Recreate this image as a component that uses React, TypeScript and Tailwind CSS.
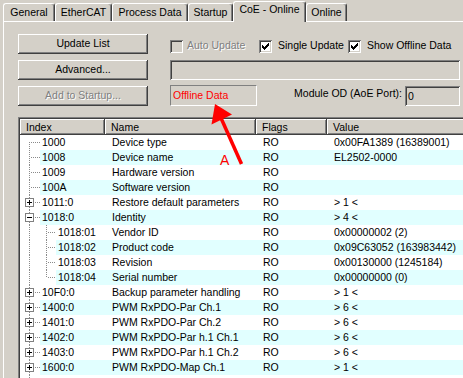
import React from "react";

const RAISED =
  "shadow-[inset_-1px_-1px_0_#404040,inset_1px_1px_0_#ffffff,inset_-2px_-2px_0_#808080,inset_2px_2px_0_#d4d0c8]";
const SUNKEN =
  "shadow-[inset_1px_1px_0_#808080,inset_-1px_-1px_0_#ffffff,inset_2px_2px_0_#404040,inset_-2px_-2px_0_#d4d0c8]";

function Tab({ className, children }: { className: string; children: React.ReactNode }) {
  return (
    <div
      className={`h-[18px] flex items-center justify-center border-t border-l border-r border-t-white border-l-white border-r-[#404040] rounded-tl-[3px] rounded-tr-[3px] shadow-[inset_-1px_0_0_#808080] ${className}`}
    >
      {children}
    </div>
  );
}

function Button({ children, disabled }: { children: React.ReactNode; disabled?: boolean }) {
  return (
    <div className={`w-[130px] h-[20px] shrink-0 flex items-center justify-center pb-[2px] bg-[#d4d0c8] ${RAISED}`}>
      <span className={disabled ? "text-[#808080] [text-shadow:1px_1px_0_#ffffff]" : ""}>{children}</span>
    </div>
  );
}

function CheckMark() {
  const cols = [
    [3, 5],
    [4, 6],
    [5, 7],
    [6, 6],
    [7, 5],
    [8, 4],
    [9, 3],
  ];
  return (
    <svg width="13" height="13" viewBox="0 0 13 13" shapeRendering="crispEdges">
      {cols.map(([x, y]) => (
        <rect key={x} x={x} y={y} width="1" height="3" fill="#000" />
      ))}
    </svg>
  );
}

function Check({ checked, disabled }: { checked?: boolean; disabled?: boolean }) {
  return (
    <div className={`w-[13px] h-[13px] shrink-0 ${disabled ? "bg-[#d4d0c8]" : "bg-white"} ${SUNKEN}`}>
      {checked && <CheckMark />}
    </div>
  );
}

type Row = { i: string; n: string; v: string; l: 0 | 1; box?: "plus" | "minus"; last?: boolean };

const rows: Row[] = [
  { i: "1000", n: "Device type", v: "0x00FA1389 (16389001)", l: 0 },
  { i: "1008", n: "Device name", v: "EL2502-0000", l: 0 },
  { i: "1009", n: "Hardware version", v: "", l: 0 },
  { i: "100A", n: "Software version", v: "", l: 0 },
  { i: "1011:0", n: "Restore default parameters", v: "> 1 <", l: 0, box: "plus" },
  { i: "1018:0", n: "Identity", v: "> 4 <", l: 0, box: "minus" },
  { i: "1018:01", n: "Vendor ID", v: "0x00000002 (2)", l: 1 },
  { i: "1018:02", n: "Product code", v: "0x09C63052 (163983442)", l: 1 },
  { i: "1018:03", n: "Revision", v: "0x00130000 (1245184)", l: 1 },
  { i: "1018:04", n: "Serial number", v: "0x00000000 (0)", l: 1, last: true },
  { i: "10F0:0", n: "Backup parameter handling", v: "> 1 <", l: 0, box: "plus" },
  { i: "1400:0", n: "PWM RxPDO-Par Ch.1", v: "> 6 <", l: 0, box: "plus" },
  { i: "1401:0", n: "PWM RxPDO-Par Ch.2", v: "> 6 <", l: 0, box: "plus" },
  { i: "1402:0", n: "PWM RxPDO-Par h.1 Ch.1", v: "> 6 <", l: 0, box: "plus" },
  { i: "1403:0", n: "PWM RxPDO-Par h.1 Ch.2", v: "> 6 <", l: 0, box: "plus" },
  { i: "1600:0", n: "PWM RxPDO-Map Ch.1", v: "> 1 <", l: 0, box: "plus" },
];

const DOT = { stroke: "#8a8a8a", strokeDasharray: "1 1", strokeWidth: 1 } as const;

function Tree({ row, first }: { row: Row; first: boolean }) {
  if (row.l === 1) {
    return (
      <svg width="36" height="15" className="shrink-0" shapeRendering="crispEdges">
        <line x1="9.5" y1="0" x2="9.5" y2="15" {...DOT} />
        <line x1="26.5" y1="0" x2="26.5" y2={row.last ? 8 : 15} {...DOT} />
        <line x1="28" y1="7.5" x2="36" y2="7.5" {...DOT} />
      </svg>
    );
  }
  return (
    <svg width="20" height="15" className="shrink-0" shapeRendering="crispEdges">
      {row.box ? (
        <>
          {!first && <line x1="9.5" y1="0" x2="9.5" y2="3" {...DOT} />}
          <line x1="9.5" y1="12" x2="9.5" y2="15" {...DOT} />
          <line x1="15" y1="7.5" x2="20" y2="7.5" {...DOT} />
          <rect x="5.5" y="3.5" width="8" height="8" fill="#ffffff" stroke="#808080" />
          <line x1="7" y1="7.5" x2="12" y2="7.5" stroke="#000" />
          {row.box === "plus" && <line x1="9.5" y1="5" x2="9.5" y2="10" stroke="#000" />}
        </>
      ) : (
        <>
          <line x1="9.5" y1={first ? 7 : 0} x2="9.5" y2="15" {...DOT} />
          <line x1="11" y1="7.5" x2="20" y2="7.5" {...DOT} />
        </>
      )}
    </svg>
  );
}

export default function App() {
  return (
    <div className="relative w-[463px] h-[378px] overflow-hidden bg-[#d4d0c8] text-black text-[10.5px] leading-none font-['Liberation_Sans',Arial,sans-serif]">
      {/* Tabs */}
      <div className="relative z-10 flex items-end h-[21px] pl-[3px]">
        <Tab className="w-[52px]">General</Tab>
        <Tab className="w-[57px]">EtherCAT</Tab>
        <Tab className="w-[76px]">Process Data</Tab>
        <Tab className="w-[45px]">Startup</Tab>
        <div className="w-[73px] h-[21px] -mb-px bg-[#d4d0c8] flex justify-center pt-[2px] border-t border-l border-r border-t-white border-l-white border-r-[#404040] rounded-tl-[3px] rounded-tr-[3px] shadow-[inset_-1px_0_0_#808080]">
          CoE - Online
        </div>
        <Tab className="w-[41px]">Online</Tab>
      </div>

      {/* Panel */}
      <div className="flex flex-col h-[357px] ml-[3px] border-t border-l border-white pl-[14px] pt-[12px]">
        {/* Row 1 */}
        <div className="flex h-[20px]">
          <Button>Update List</Button>
          <div className="ml-[22px] pt-[6px] flex items-start">
            <div className="w-[89px] flex items-start">
              <Check disabled />
              <span className="ml-[4px] text-[#808080] [text-shadow:1px_1px_0_#ffffff]">Auto Update</span>
            </div>
            <div className="w-[89px] flex items-start">
              <Check checked />
              <span className="ml-[6px]">Single Update</span>
            </div>
            <div className="flex items-start">
              <Check checked />
              <span className="ml-[6px] whitespace-nowrap">Show Offline Data</span>
            </div>
          </div>
        </div>

        {/* Row 2 */}
        <div className="flex h-[20px] mt-[6px]">
          <Button>Advanced...</Button>
          <div className={`ml-[22px] w-[290px] h-[20px] bg-[#d4d0c8] ${SUNKEN}`} />
        </div>

        {/* Row 3 */}
        <div className="flex h-[20px] mt-[6px]">
          <Button disabled>Add to Startup...</Button>
          <div className="ml-[22px] -mt-px w-[87px] h-[21px] flex items-center pl-[2px] border-t border-l border-b border-r border-t-[#808080] border-l-[#808080] border-b-white border-r-white text-[#ff0000]">
            Offline Data
          </div>
          <div className="w-[145px] flex justify-end items-start pt-[2px] whitespace-nowrap">Module OD (AoE Port):</div>
          <div className={`ml-[3px] w-[55px] h-[20px] flex items-center pl-[3px] bg-[#d4d0c8] ${SUNKEN}`}>0</div>
        </div>

        {/* List */}
        <div className="mt-[11px] w-[450px] flex-1 bg-white pl-[2px] pt-[2px] shadow-[inset_1px_1px_0_#808080,inset_2px_2px_0_#404040] overflow-hidden">
          <div className="flex h-[16px] bg-[#d4d0c8]">
            <div className={`w-[85px] flex items-center pl-[6px] ${RAISED}`}>Index</div>
            <div className={`w-[151px] flex items-center pl-[6px] ${RAISED}`}>Name</div>
            <div className={`w-[71px] flex items-center pl-[6px] ${RAISED}`}>Flags</div>
            <div className={`flex-1 flex items-center pl-[6px] ${RAISED}`}>Value</div>
          </div>
          {rows.map((r, idx) => (
            <div key={r.i} className="flex h-[15px]">
              <Tree row={r} first={idx === 0} />
              <div className={`flex flex-1 items-center ${idx % 2 === 1 ? "bg-[#e1ffff]" : "bg-white"}`}>
                <div className={`${r.l === 1 ? "w-[49px]" : "w-[65px]"} pl-[2px] whitespace-nowrap`}>{r.i}</div>
                <div className="w-[151px] pl-[7px] whitespace-nowrap">{r.n}</div>
                <div className="w-[71px] pl-[7px]">RO</div>
                <div className="flex-1 pl-[7px] whitespace-nowrap">{r.v}</div>
              </div>
            </div>
          ))}
          <svg width="20" height="6" className="block" shapeRendering="crispEdges">
            <line x1="9.5" y1="0" x2="9.5" y2="6" {...DOT} />
          </svg>
        </div>
      </div>

      {/* Red arrow annotation */}
      <svg className="absolute left-0 top-0 pointer-events-none" width="463" height="378">
        <polygon points="215,104 211.5,124.5 232,114.5" fill="#ff0000" />
        <line x1="221" y1="118" x2="241.5" y2="164" stroke="#ff0000" strokeWidth="3.5" />
      </svg>
      <div className="absolute left-[220px] top-[153px] text-[14px] leading-none text-[#ff0000]">A</div>
    </div>
  );
}
